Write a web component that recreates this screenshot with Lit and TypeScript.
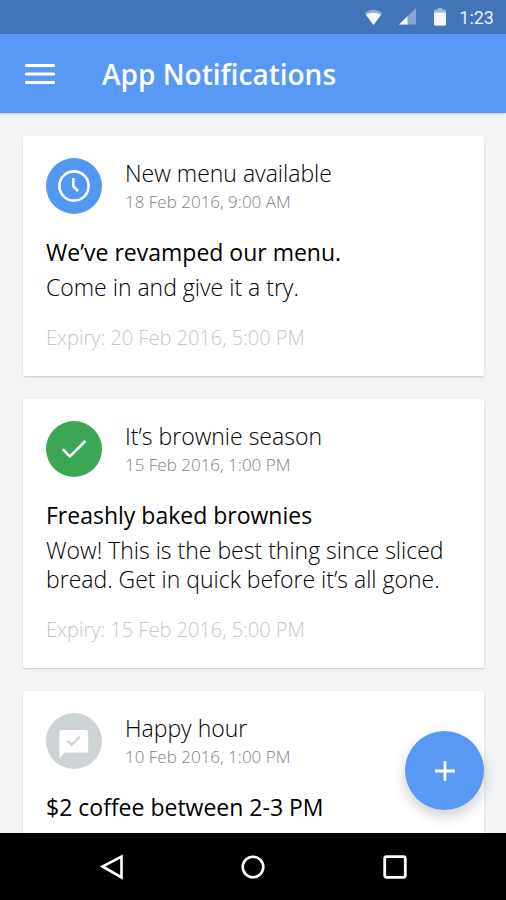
import { LitElement, html, svg, css, nothing } from "lit";
import { customElement, property } from "lit/decorators.js";

type Kind = "scheduled" | "done" | "message";

interface Notice {
  kind: Kind;
  title: string;
  date: string;
  headline: string;
  body?: string;
  expiry?: string;
}

const notices: Notice[] = [
  {
    kind: "scheduled",
    title: "New menu available",
    date: "18 Feb 2016, 9:00 AM",
    headline: "We’ve revamped our menu.",
    body: "Come in and give it a try.",
    expiry: "Expiry: 20 Feb 2016, 5:00 PM",
  },
  {
    kind: "done",
    title: "It’s brownie season",
    date: "15 Feb 2016, 1:00 PM",
    headline: "Freashly baked brownies",
    body: "Wow! This is the best thing since sliced bread. Get in quick before it’s all gone.",
    expiry: "Expiry: 15 Feb 2016, 5:00 PM",
  },
  {
    kind: "message",
    title: "Happy hour",
    date: "10 Feb 2016, 1:00 PM",
    headline: "$2 coffee between 2-3 PM",
  },
];

const glyphs = {
  scheduled: svg`
    <circle cx="28" cy="28" r="14.6" fill="none" stroke="#fff" stroke-width="2.6"/>
    <path d="M27.3 20v8.4l4.8 4.6" fill="none" stroke="#fff" stroke-width="2.6"/>`,
  done: svg`
    <path d="M16.6 28.2l7.3 7.3L39.4 20" fill="none" stroke="#fff" stroke-width="2.6"/>`,
  message: svg`
    <path d="M16 17h23.6a2.6 2.6 0 0 1 2.6 2.6v17.4a2.6 2.6 0 0 1-2.6 2.6H19L13.4 45V19.6a2.6 2.6 0 0 1 2.6-2.6z" fill="#fff"/>
    <path d="M21.4 27.6l4.3 4.3 8-8.2" fill="none" stroke="#ced3d6" stroke-width="2.4"/>`,
};

@customElement("notice-card")
export class NoticeCard extends LitElement {
  @property({ attribute: false }) notice!: Notice;

  static styles = css`
    :host {
      display: block;
      flex: none;
    }
    .card {
      padding: 22px 23px 24px;
      border-radius: 2px;
      background: #fff;
      box-shadow: 0 1px 2px rgba(0, 0, 0, 0.18);
    }
    .head {
      display: flex;
      gap: 23px;
    }
    .badge {
      flex: none;
      width: 56px;
      height: 56px;
      border-radius: 50%;
    }
    .badge svg {
      display: block;
    }
    .scheduled {
      background: #5297f2;
    }
    .done {
      background: #3ba755;
    }
    .message {
      background: #ced3d6;
    }
    h2,
    h3,
    p {
      margin: 0;
      font-weight: 300;
    }
    h2 {
      font-size: 23px;
      line-height: 30px;
      color: #000;
    }
    .date {
      font-size: 17px;
      line-height: 28px;
      color: #7a8086;
    }
    h3 {
      margin-top: 22px;
      font-size: 23px;
      font-weight: 500;
      line-height: 29px;
      color: #000;
    }
    .body {
      margin-top: 6px;
      font-size: 23px;
      line-height: 29px;
      color: #000;
    }
    .expiry {
      margin-top: 21px;
      font-size: 20px;
      line-height: 29px;
      color: #c3c8cb;
    }
  `;

  render() {
    const n = this.notice;
    return html`<article class="card">
      <header class="head">
        <div class="badge ${n.kind}">
          <svg width="56" height="56" viewBox="0 0 56 56" aria-hidden="true">${glyphs[n.kind]}</svg>
        </div>
        <div>
          <h2>${n.title}</h2>
          <p class="date">${n.date}</p>
        </div>
      </header>
      <h3>${n.headline}</h3>
      ${n.body ? html`<p class="body">${n.body}</p>` : nothing}
      ${n.expiry ? html`<p class="expiry">${n.expiry}</p>` : nothing}
    </article>`;
  }
}

@customElement("app-root")
export class AppRoot extends LitElement {
  static styles = css`
    :host {
      display: flex;
      flex-direction: column;
      height: 100vh;
      font-family: "Open Sans", "Noto Sans", sans-serif;
      background: #f2f4f6;
    }
    button {
      display: flex;
      align-items: center;
      justify-content: center;
      padding: 0;
      border: 0;
      background: none;
      color: #fff;
      cursor: pointer;
    }
    .status {
      flex: none;
      display: flex;
      align-items: center;
      justify-content: flex-end;
      height: 34px;
      padding: 2px 12px 0 0;
      box-sizing: border-box;
      background: #4274b8;
    }
    .status svg {
      display: block;
    }
    .clock {
      margin-left: 11px;
      font: 400 18px/24px Roboto, sans-serif;
      color: #e6eef9;
    }
    .bar {
      flex: none;
      display: flex;
      align-items: center;
      gap: 39px;
      height: 79px;
      padding: 0 16px;
      box-sizing: border-box;
      background: #5799f5;
      box-shadow: 0 1px 2px rgba(0, 0, 0, 0.16);
      z-index: 1;
    }
    .menu {
      width: 47px;
      height: 48px;
    }
    h1 {
      margin: 0;
      font-size: 28px;
      font-weight: 600;
      line-height: 36px;
      color: #fff;
    }
    .stage {
      position: relative;
      flex: 1;
      min-height: 0;
    }
    .list {
      display: flex;
      flex-direction: column;
      gap: 23px;
      height: 100%;
      padding: 23px 22px 0 23px;
      box-sizing: border-box;
      overflow-y: auto;
      scrollbar-width: none;
    }
    .add {
      position: absolute;
      right: 22px;
      bottom: 23px;
      width: 79px;
      height: 79px;
      border-radius: 50%;
      background: #5799f5;
      box-shadow: 0 6px 14px rgba(0, 0, 0, 0.2);
    }
    .nav {
      flex: none;
      display: flex;
      justify-content: center;
      gap: 94px;
      height: 67px;
      background: #000;
    }
    .nav button {
      width: 48px;
    }
  `;

  render() {
    return html`
      <div class="status">
        <svg width="84" height="24" viewBox="0 0 84 24" aria-hidden="true">
          <path d="M0.5 7Q9.5 0.5 18.5 7L9.5 19z" fill="#8cabd6"/>
          <path d="M2 8.8Q9.5 4.5 17 8.8L9.5 19z" fill="#f4f8fd"/>
          <path d="M35 18.5L52 2v16.5z" fill="#86a8d7"/>
          <path d="M35 18.5l8.5-8.3v8.3z" fill="#f4f8fd"/>
          <path d="M73.5 2h5v2h-5z" fill="#9cb8de"/>
          <rect x="70" y="3.5" width="12" height="16" rx="1.5" fill="#9cb8de"/>
          <path d="M70 6.5h12V18a1.5 1.5 0 0 1-1.5 1.5h-9A1.5 1.5 0 0 1 70 18z" fill="#f4f8fd"/>
        </svg>
        <span class="clock">1:23</span>
      </div>
      <header class="bar">
        <button class="menu" aria-label="Menu">
          <svg width="30" height="22" viewBox="0 0 30 22" aria-hidden="true">
            <path d="M1 2.5h28M1 11h28M1 19.5h28" stroke="#fff" stroke-width="2.8" stroke-linecap="round"/>
          </svg>
        </button>
        <h1>App Notifications</h1>
      </header>
      <div class="stage">
        <main class="list">
          ${notices.map((n) => html`<notice-card .notice=${n}></notice-card>`)}
        </main>
        <button class="add" aria-label="Add notification">
          <svg width="22" height="22" viewBox="0 0 22 22" aria-hidden="true">
            <path d="M11 1v20M1 11h20" stroke="#fff" stroke-width="2.8"/>
          </svg>
        </button>
      </div>
      <nav class="nav">
        <button aria-label="Back">
          <svg width="26" height="26" viewBox="0 0 26 26" aria-hidden="true">
            <path d="M23.5 2.6v20.8L4.5 12.5z" fill="none" stroke="#fff" stroke-width="2.6"/>
          </svg>
        </button>
        <button aria-label="Home">
          <svg width="26" height="26" viewBox="0 0 26 26" aria-hidden="true">
            <circle cx="13" cy="13" r="10.3" fill="none" stroke="#fff" stroke-width="2.6"/>
          </svg>
        </button>
        <button aria-label="Recent apps">
          <svg width="26" height="26" viewBox="0 0 26 26" aria-hidden="true">
            <rect x="2.7" y="2.7" width="20.6" height="20.6" rx="2" fill="none" stroke="#fff" stroke-width="2.8"/>
          </svg>
        </button>
      </nav>
    `;
  }
}
